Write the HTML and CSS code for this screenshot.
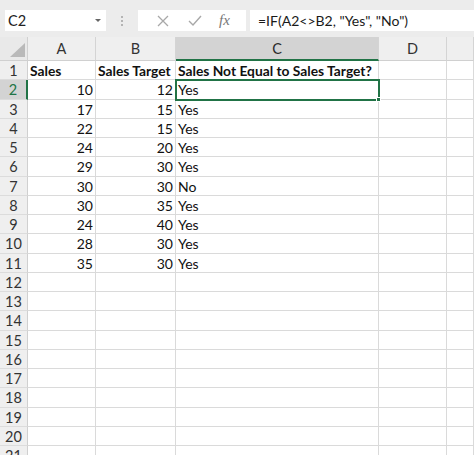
FILE: index.html
```html
<!DOCTYPE html>
<html lang="en">
<head>
    <meta charset="UTF-8">
    <title>Sales vs Target</title>
    <link rel="stylesheet" href="styles.css">
</head>
<body>
    <!-- formula bar -->
    <div class="toolbar">
        <div class="namebox">
            <span>C2</span>
            <span class="caret"></span>
        </div>
        <div class="grip"><i></i><i></i><i></i></div>
        <div class="actions">
            <svg width="14" height="14" viewBox="0 0 14 14"><path d="M2 2 L12 12 M12 2 L2 12" stroke="#a8a8a8" stroke-width="1.3" fill="none"/></svg>
            <svg width="16" height="14" viewBox="0 0 16 14"><path d="M2 7 L6 11 L14 2" stroke="#a8a8a8" stroke-width="1.4" fill="none"/></svg>
            <span class="fx">fx</span>
        </div>
        <div class="formula">=IF(A2&lt;&gt;B2, "Yes", "No")</div>
    </div>

    <!-- sheet -->
    <div class="sheet">
        <div class="corner"><span class="tri"></span></div>
        <div class="colhead">A</div>
        <div class="colhead">B</div>
        <div class="colhead sel">C</div>
        <div class="colhead">D</div>
        <div class="colhead"></div>

        <div class="rowhead">1</div>
        <div class="cell b">Sales</div>
        <div class="cell b">Sales Target</div>
        <div class="cell b">Sales Not Equal to Sales Target?</div>
        <div class="cell"></div>
        <div class="cell"></div>

        <div class="rowhead sel">2</div>
        <div class="cell num">10</div>
        <div class="cell num">12</div>
        <div class="cell active">Yes<span class="handle"></span></div>
        <div class="cell"></div>
        <div class="cell"></div>

        <div class="rowhead">3</div>
        <div class="cell num">17</div>
        <div class="cell num">15</div>
        <div class="cell">Yes</div>
        <div class="cell"></div>
        <div class="cell"></div>

        <div class="rowhead">4</div>
        <div class="cell num">22</div>
        <div class="cell num">15</div>
        <div class="cell">Yes</div>
        <div class="cell"></div>
        <div class="cell"></div>

        <div class="rowhead">5</div>
        <div class="cell num">24</div>
        <div class="cell num">20</div>
        <div class="cell">Yes</div>
        <div class="cell"></div>
        <div class="cell"></div>

        <div class="rowhead">6</div>
        <div class="cell num">29</div>
        <div class="cell num">30</div>
        <div class="cell">Yes</div>
        <div class="cell"></div>
        <div class="cell"></div>

        <div class="rowhead">7</div>
        <div class="cell num">30</div>
        <div class="cell num">30</div>
        <div class="cell">No</div>
        <div class="cell"></div>
        <div class="cell"></div>

        <div class="rowhead">8</div>
        <div class="cell num">30</div>
        <div class="cell num">35</div>
        <div class="cell">Yes</div>
        <div class="cell"></div>
        <div class="cell"></div>

        <div class="rowhead">9</div>
        <div class="cell num">24</div>
        <div class="cell num">40</div>
        <div class="cell">Yes</div>
        <div class="cell"></div>
        <div class="cell"></div>

        <div class="rowhead">10</div>
        <div class="cell num">28</div>
        <div class="cell num">30</div>
        <div class="cell">Yes</div>
        <div class="cell"></div>
        <div class="cell"></div>

        <div class="rowhead">11</div>
        <div class="cell num">35</div>
        <div class="cell num">30</div>
        <div class="cell">Yes</div>
        <div class="cell"></div>
        <div class="cell"></div>

        <div class="rowhead">12</div><div class="cell"></div><div class="cell"></div><div class="cell"></div><div class="cell"></div><div class="cell"></div>
        <div class="rowhead">13</div><div class="cell"></div><div class="cell"></div><div class="cell"></div><div class="cell"></div><div class="cell"></div>
        <div class="rowhead">14</div><div class="cell"></div><div class="cell"></div><div class="cell"></div><div class="cell"></div><div class="cell"></div>
        <div class="rowhead">15</div><div class="cell"></div><div class="cell"></div><div class="cell"></div><div class="cell"></div><div class="cell"></div>
        <div class="rowhead">16</div><div class="cell"></div><div class="cell"></div><div class="cell"></div><div class="cell"></div><div class="cell"></div>
        <div class="rowhead">17</div><div class="cell"></div><div class="cell"></div><div class="cell"></div><div class="cell"></div><div class="cell"></div>
        <div class="rowhead">18</div><div class="cell"></div><div class="cell"></div><div class="cell"></div><div class="cell"></div><div class="cell"></div>
        <div class="rowhead">19</div><div class="cell"></div><div class="cell"></div><div class="cell"></div><div class="cell"></div><div class="cell"></div>
        <div class="rowhead">20</div><div class="cell"></div><div class="cell"></div><div class="cell"></div><div class="cell"></div><div class="cell"></div>
        <div class="rowhead">21</div><div class="cell"></div><div class="cell"></div><div class="cell"></div><div class="cell"></div><div class="cell"></div>
    </div>
</body>
</html>
```

FILE: styles.css
```css
* {
    box-sizing: border-box;
}

body {
    margin: 0;
    background: #fff;
    font-family: Lato, "Open Sans", sans-serif;
    color: #111;
    overflow: hidden;
    height: 455px;
}

/* formula bar */
.toolbar {
    height: 37px;
    background: #ececec;
    display: flex;
    align-items: flex-start;
    padding: 10px 0 0 5px;
}

.namebox {
    width: 101px;
    height: 21px;
    background: #fff;
    display: flex;
    align-items: center;
    justify-content: space-between;
    padding: 0 5px 0 3px;
    font-size: 14.5px;
    color: #222;
}

.caret {
    width: 0;
    height: 0;
    border-left: 3px solid transparent;
    border-right: 3px solid transparent;
    border-top: 3px solid #666;
}

.grip {
    width: 32px;
    height: 21px;
    display: flex;
    flex-direction: column;
    align-items: center;
    justify-content: center;
    gap: 2px;
}

.grip i {
    width: 2px;
    height: 2px;
    background: #b4b4b4;
}

.actions {
    width: 108px;
    height: 21px;
    background: #fff;
    display: flex;
    align-items: center;
    justify-content: space-around;
    padding: 0 8px 0 10px;
}

.fx {
    font-family: "Liberation Serif", serif;
    font-style: italic;
    font-size: 15px;
    color: #777;
}

.formula {
    flex: 1;
    height: 21px;
    margin-left: 4px;
    background: #fff;
    font-size: 14px;
    line-height: 21px;
    padding-left: 8px;
    color: #1a1a1a;
}

/* grid */
.sheet {
    display: grid;
    grid-template-columns: 28px 68px 80px 203px 68px 1fr;
    grid-template-rows: 24px repeat(21, 19.25px);
}

.corner {
    background: #e9e9e9;
    border-right: 1px solid #d0d0d0;
    border-bottom: 1px solid #d0d0d0;
    position: relative;
}

.tri {
    position: absolute;
    right: 2px;
    bottom: 3px;
    width: 0;
    height: 0;
    border-left: 15px solid transparent;
    border-bottom: 14px solid #b9b9b9;
}

.colhead {
    background: #efefef;
    border-right: 1px solid #d4d4d4;
    border-bottom: 1px solid #d0d0d0;
    text-align: center;
    font-size: 14.5px;
    line-height: 23px;
    color: #333;
}

.colhead.sel {
    background: #d3d3d3;
    border-bottom: 2px solid #217346;
    color: #2a2a2a;
}

.rowhead {
    background: #efefef;
    border-right: 1px solid #d0d0d0;
    border-bottom: 1px solid #dcdcdc;
    font-size: 14.5px;
    line-height: 19px;
    text-align: center;
    color: #333;
}

.rowhead.sel {
    background: #d3d3d3;
    border-right: 2px solid #217346;
    color: #217346;
}

.cell {
    border-right: 1px solid #dadada;
    border-bottom: 1px solid #dadada;
    font-size: 14px;
    line-height: 19px;
    padding: 0 2px;
    white-space: nowrap;
    position: relative;
}

.cell.b {
    font-weight: bold;
    font-size: 13.8px;
}

.cell.num {
    text-align: right;
}

.cell.active {
    outline: 2px solid #217346;
    outline-offset: -1px;
    z-index: 2;
}

.handle {
    position: absolute;
    right: -3px;
    bottom: -3px;
    width: 5px;
    height: 5px;
    background: #217346;
    border: 1px solid #fff;
}
```
